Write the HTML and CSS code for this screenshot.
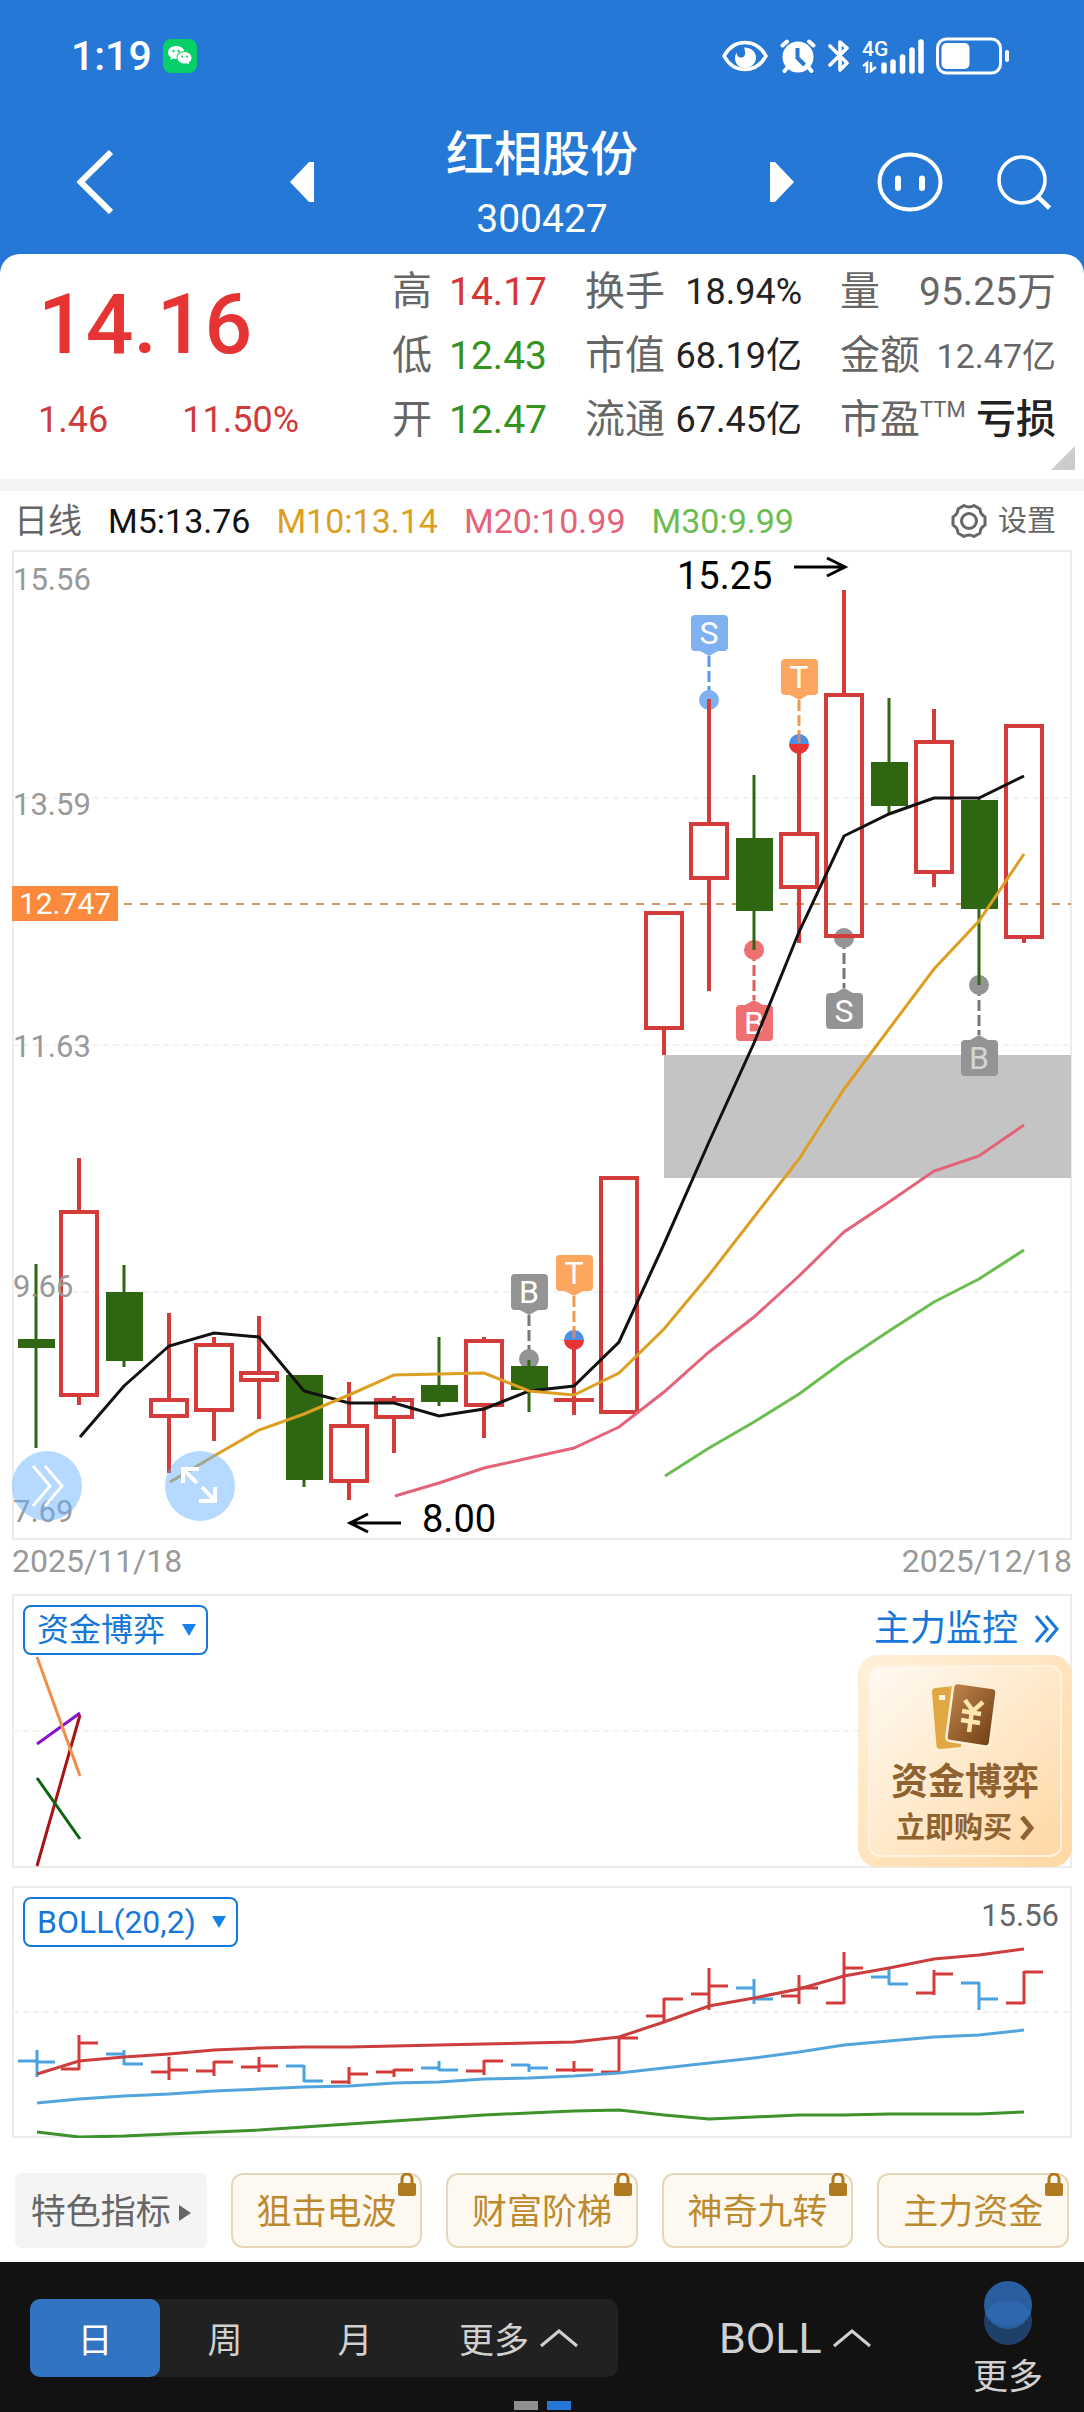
FILE: index.html
```html
<!DOCTYPE html>
<html lang="zh-CN">
<head>
<meta charset="utf-8">
<meta name="viewport" content="width=device-width">
<title>红相股份 300427</title>
<link rel="stylesheet" href="styles.css">
</head>
<body>
<header class="top">
  <div class="status">
    <span class="clock">1:19</span>
    <svg class="wechat" width="34" height="34" viewBox="0 0 34 34">
      <rect width="34" height="34" rx="8" fill="#07cf68"/>
      <path fill="#fff" d="M13 7c-4.500 0-8 2.900-8 6.500 0 2 1.100 3.800 2.900 5L7.300 21l2.900-1.500c.9.3 1.800.4 2.800.4h.8c-1-4.500 2.600-8 7.400-8C20.500 9 17.100 7 13 7z"/>
      <path fill="#fff" d="M21.500 13c-4 0-7 2.600-7 5.800s3 5.800 7 5.800c.8 0 1.600-.1 2.300-.3l2.400 1.300-.6-2.100c1.800-1.100 2.900-2.800 2.900-4.700 0-3.200-3-5.800-7-5.800z"/>
      <g fill="#07cf68"><circle cx="10.500" cy="12" r="1.200"/><circle cx="15.500" cy="12" r="1.200"/><circle cx="19" cy="17.500" r="1"/><circle cx="24" cy="17.500" r="1"/></g>
    </svg>
    <div class="status-icons">
      <svg width="46" height="36" viewBox="0 0 46 36"><path d="M2 18C7 9 14 4.500 23 4.500S39 9 44 18C39 27 32 31.500 23 31.500S7 27 2 18z" fill="none" stroke="#fff" stroke-width="3.600"/><path d="M22 9.500c7 0 12 4 12 10S29 30 23 30 13 26 13 20c0-2 .6-3.600 1.800-5 .2 3 1.700 4.500 4 4.500 3 0 4.800-2.500 4.300-5.600-.2-1.700-.6-3-1.100-4.400z" fill="#fff"/></svg>
      <svg width="36" height="36" viewBox="0 0 36 36"><g stroke="#fff" stroke-width="4" stroke-linecap="round"><path d="M2.500 7.500 7 3.500M33.500 7.500 29 3.500M7 30l-2.500 3M29 30l2.500 3"/></g><circle cx="18" cy="19" r="15.500" fill="#fff"/><path d="M17.500 10v10l7 7" fill="none" stroke="#2578d5" stroke-width="4"/></svg>
      <svg width="22" height="36" viewBox="0 0 22 36"><path d="M2 8l17 17-7 7V4l7 6L2 27" fill="none" stroke="#fff" stroke-width="3.600" stroke-linecap="round" stroke-linejoin="round"/></svg>
      <svg class="signal" width="62" height="36" viewBox="0 0 62 36"><text class="net" x="0" y="18">4G</text><path d="M1 28l4-3v10M9 24v9l5-4" fill="none" stroke="#fff" stroke-width="2.500"/><path d="M22 27v6M31 24v9M40.500 19v14M50 12v21M59 4v29" stroke="#fff" stroke-width="5.500" stroke-linecap="round"/></svg>
      <svg width="74" height="38" viewBox="0 0 74 38"><rect x="1.500" y="2" width="63" height="34" rx="9" fill="none" stroke="#fff" stroke-width="3"/><rect x="5.500" y="6" width="28" height="26" rx="5" fill="#fff"/><rect x="69" y="13" width="4" height="12" rx="2" fill="#fff"/></svg>
    </div>
  </div>
  <nav class="bar">
    <div class="bar-left">
      <button class="plain" aria-label="返回"><svg width="36" height="64" viewBox="0 0 36 64"><path d="M34 2 3.500 32 34 62" fill="none" stroke="#fff" stroke-width="6"/></svg></button>
      <button class="plain" aria-label="上一只"><svg width="24" height="40" viewBox="0 0 24 40"><path d="M24 0v40h-5L0 20 19 0z" fill="#fff"/></svg></button>
    </div>
    <div class="title"><h1>红相股份</h1><span>300427</span></div>
    <div class="bar-right">
      <button class="plain" aria-label="下一只"><svg width="24" height="40" viewBox="0 0 24 40"><path d="M0 0v40h5l19-20L5 0z" fill="#fff"/></svg></button>
      <button class="plain face" aria-label="助手"><svg width="66" height="60" viewBox="0 0 66 60"><ellipse cx="33" cy="30" rx="30.500" ry="27.500" fill="none" stroke="#fff" stroke-width="4"/><path d="M21 26.500v9.500M45 26.500v9.500" stroke="#fff" stroke-width="6" stroke-linecap="round"/></svg></button>
      <button class="plain" aria-label="搜索"><svg width="54" height="56" viewBox="0 0 54 56"><circle cx="25" cy="26" r="23" fill="none" stroke="#fff" stroke-width="3.600"/><path d="M41 43 52.500 54" stroke="#fff" stroke-width="4.500"/></svg></button>
    </div>
  </nav>
</header>

<main>
  <section class="quote">
    <div class="price">
      <strong>14.16</strong>
      <div class="change"><span>1.46</span><span>11.50%</span></div>
    </div>
    <dl class="stats">
      <div><dt>高</dt><dd class="up">14.17</dd></div>
      <div><dt>低</dt><dd class="down">12.43</dd></div>
      <div><dt>开</dt><dd class="down">12.47</dd></div>
    </dl>
    <dl class="stats">
      <div><dt>换手</dt><dd class="mid">18.94%</dd></div>
      <div><dt>市值</dt><dd class="mid">68.19亿</dd></div>
      <div><dt>流通</dt><dd class="mid">67.45亿</dd></div>
    </dl>
    <dl class="stats">
      <div><dt>量</dt><dd>95.25万</dd></div>
      <div><dt>金额</dt><dd class="small">12.47亿</dd></div>
      <div><dt>市盈<sup>TTM</sup></dt><dd class="loss">亏损</dd></div>
    </dl>
    <svg class="corner" width="24" height="24" viewBox="0 0 24 24"><path d="M24 0v24H0z" fill="#ccc"/></svg>
  </section>

  <div class="legend">
    <span class="period">日线</span>
    <span class="m5">M5:13.76</span>
    <span class="m10">M10:13.14</span>
    <span class="m20">M20:10.99</span>
    <span class="m30">M30:9.99</span>
    <button class="plain settings">
      <svg width="38" height="38" viewBox="0 0 38 38" fill="none" stroke="#666" stroke-width="3" stroke-linejoin="round"><path d="M14 3.500q5 3 10 0l6 3.500q0 5 5 8v8q-5 3-5 8l-6 3.500q-5-3-10 0L8 31q0-5-5-8v-8q5-3 5-8z"/><circle cx="19" cy="19" r="7.500"/></svg>
      设置
    </button>
  </div>

  <section class="chart">
    <svg class="plot" viewBox="12 550 1060 990" role="img" aria-label="日K线">
      <rect class="frame" x="13" y="551" width="1058" height="988"/>
      <path class="grid" d="M13 798H1071M13 1045H1071M13 1292H1071"/>
      <path d="M124 904H1071" stroke="#cf9a5f" stroke-width="2" stroke-dasharray="8 8"/>
      <rect x="664" y="1055" width="407" height="123" fill="#c4c4c4"/>

      <g class="leads">
        <path d="M709 656V700" stroke="#5a98e8"/><path d="M799 700V744" stroke="#f09a50"/>
        <path d="M754 950V1000" stroke="#e05a5a"/><path d="M844 938V988" stroke="#777"/>
        <path d="M979 985V1035" stroke="#777"/><path d="M529 1315V1359" stroke="#777"/>
        <path d="M574 1296V1340" stroke="#f09a50"/>
      </g>
      <g>
        <circle cx="709" cy="700" r="10" fill="#7fb1f0"/>
        <circle cx="754" cy="950" r="10" fill="#ef7070"/>
        <circle cx="844" cy="938" r="10" fill="#949494"/>
        <circle cx="979" cy="985" r="10" fill="#949494"/>
        <circle cx="529" cy="1359" r="10" fill="#949494"/>
      </g>

      <path class="red" d="M79 1158V1212M79 1396V1405M169 1313V1400M169 1416V1473M214 1337V1345M214 1410V1441M259 1316V1373M259 1380V1419M349 1382V1426M349 1481V1500M394 1396V1400M394 1417V1453M484 1337V1341M484 1405V1438M574 1340V1415M664 1028V1055M709 699V824M709 878V991M799 744V834M799 887V943M844 590V695M934 709V742M934 872V887M1024 724V726M1024 937V943"/>
      <g class="red">
        <rect x="61" y="1212" width="36" height="183"/><rect x="151" y="1400" width="36" height="16"/>
        <rect x="196" y="1345" width="36" height="65"/><rect x="241" y="1373" width="36" height="7"/>
        <rect x="331" y="1426" width="36" height="55"/><rect x="376" y="1400" width="36" height="17"/>
        <rect x="466" y="1341" width="36" height="64"/><path d="M554 1400H594"/>
        <rect x="601" y="1178" width="36" height="234"/><rect x="646" y="913" width="36" height="115"/>
        <rect x="691" y="824" width="36" height="54"/><rect x="781" y="834" width="36" height="53"/>
        <rect x="826" y="695" width="36" height="241"/><rect x="916" y="742" width="36" height="130"/>
        <rect x="1006" y="726" width="36" height="211"/>
      </g>
      <path class="green-wick" d="M36 1264V1448M124 1265V1367M304 1375V1487M439 1337V1406M529 1360V1412M754 775V950M889 698V815M979 798V985"/>
      <path class="green" d="M18 1339h37v9h-37zM106 1292h37v69h-37zM286 1375h37v105h-37zM421 1385h37v17h-37zM511 1366h37v24h-37zM736 838h37v73h-37zM871 762h37v44h-37zM961 800h37v109h-37z"/>

      <g>
        <path d="M789 744a10 10 0 0 1 20 0z" fill="#4a90e6"/><path d="M789 744a10 10 0 0 0 20 0z" fill="#e63333"/><path d="M799 734v9" stroke="#d08a70" stroke-width="3"/>
        <path d="M564 1340a10 10 0 0 1 20 0z" fill="#4a90e6"/><path d="M564 1340a10 10 0 0 0 20 0z" fill="#e63333"/><path d="M574 1330v8" stroke="#d08a70" stroke-width="3"/>
      </g>

      <g class="tags">
        <g fill="#7fb1f0"><rect x="691" y="615" width="37" height="36" rx="4"/><path d="M700 651h18l-9 5z"/></g>
        <g fill="#fda660"><rect x="781" y="659" width="37" height="36" rx="4"/><path d="M790 695h18l-9 5z"/><rect x="556" y="1255" width="37" height="36" rx="4"/><path d="M565 1291h18l-9 5z"/></g>
        <g fill="#ef7070"><rect x="736" y="1005" width="37" height="36" rx="4"/><path d="M745 1005h18l-9-5z"/></g>
        <g fill="#949494"><rect x="826" y="993" width="37" height="36" rx="4"/><path d="M835 993h18l-9-5z"/><rect x="961" y="1040" width="37" height="36" rx="4"/><path d="M970 1040h18l-9-5z"/><rect x="511" y="1274" width="37" height="36" rx="4"/><path d="M520 1310h18l-9 5z"/></g>
        <g class="tag-text">
          <text x="709" y="644">S</text><text x="799" y="688">T</text><text x="754" y="1034">B</text><text x="844" y="1022">S</text><text x="529" y="1303">B</text><text x="574" y="1284">T</text>
          <text x="979" y="1069" class="shaded">B</text>
        </g>
      </g>

      <g class="line">
        <polyline stroke="#111" points="80,1437 124,1386 169,1346 214,1333 259,1337 304,1391 349,1403 394,1403 439,1416 484,1409 529,1391 574,1386 619,1342 664,1244 709,1142 754,1043 799,932 844,836 889,814 934,798 979,798 1024,776"/>
        <polyline stroke="#dd9f22" points="170,1482 214,1456 259,1430 304,1414 349,1395 394,1375 439,1374 484,1373 529,1391 574,1395 619,1373 664,1329 709,1275 754,1217 799,1159 844,1089 889,1029 934,969 979,921 1024,854"/>
        <polyline stroke="#e5637a" points="395,1496 439,1483 484,1468 529,1458 574,1448 619,1427 664,1392 709,1352 754,1317 799,1276 844,1232 889,1202 934,1171 979,1156 1024,1125"/>
        <polyline stroke="#6cbd50" points="665,1476 709,1448 754,1422 799,1394 844,1361 889,1331 934,1302 979,1279 1024,1250"/>
      </g>

      <g class="axis">
        <text x="13" y="590">15.56</text><text x="13" y="815">13.59</text><text x="13" y="1057">11.63</text><text x="13" y="1297">9.66</text><text x="13" y="1522">7.69</text>
      </g>
      <rect x="12" y="886" width="106" height="35" fill="#fb8a3c"/>
      <text class="cost" x="65" y="914">12.747</text>
      <g class="extreme">
        <text x="677" y="589">15.25</text><path d="M794 567h51M827 558l18 9-18 9"/>
        <text x="422" y="1532">8.00</text><path d="M401 1523h-51M368 1514l-18 9 18 9"/>
      </g>
    </svg>
    <div class="float">
      <button class="round" aria-label="展开"><svg width="70" height="70" viewBox="0 0 70 70"><path d="M21 15 38 35 21 55M33 15 50 35 33 55" fill="none" stroke="#fff" stroke-width="3"/></svg></button>
      <button class="round" aria-label="全屏"><svg width="70" height="70" viewBox="0 0 70 70"><path d="M32 32 18 18M18 32V18h16M37 36 50 50M50 36V50H34" fill="none" stroke="#fff" stroke-width="4"/></svg></button>
    </div>
  </section>
  <div class="dates"><time>2025/11/18</time><time>2025/12/18</time></div>

  <section class="panel">
    <svg class="plot" viewBox="12 1594 1060 274" role="img" aria-label="资金博弈曲线">
      <rect class="frame" x="13" y="1595" width="1058" height="272"/>
      <path class="grid" d="M13 1731H1071"/>
      <g class="line">
        <path d="M37 1744 80 1713" stroke="#8b10d0"/><path d="M37 1866 80 1715" stroke="#a81212"/>
        <path d="M37 1657 80 1776" stroke="#ef8f48"/><path d="M37 1778 80 1839" stroke="#0b640b"/>
      </g>
    </svg>
    <div class="overlay">
      <label class="picker"><select aria-label="指标"><option>资金博弈</option></select><svg width="14" height="12" viewBox="0 0 14 12"><path d="M0 0h14L7 12z" fill="#1481ee"/></svg></label>
      <div class="side">
        <a class="monitor" href="#">主力监控<svg width="26" height="30" viewBox="0 0 26 30"><path d="M2 2 13 15 2 28M12 2 23 15 12 28" fill="none" stroke="#1577d8" stroke-width="3"/></svg></a>
        <a class="promo" href="#">
          <span class="promo-in">
            <svg width="68" height="70" viewBox="0 0 68 70">
              <defs>
                <linearGradient id="card" x1="0" y1="0" x2="1" y2="1"><stop offset="0" stop-color="#c58a50"/><stop offset="1" stop-color="#6b3a0e"/></linearGradient>
              </defs>
              <path d="M5 7 32 4 30 66 9 68q-3 0-3.500-3L1 11q0-4 4-4z" fill="#e0a743"/><rect x="8" y="14" width="6" height="5" fill="#fff8e0"/>
              <path d="M27 2 62 7q4 1 3.500 5L59 62q-.5 4-4.500 3.500L19 60q-4-.5-3.500-4.500L22 6q1-4.500 5-4z" fill="url(#card)" stroke="#ffeed6" stroke-width="2.500"/>
              <path d="M34 19 42 30 52 21M31 30 50 33M30 39 49 42M41 30 38 51" fill="none" stroke="#ffe5b0" stroke-width="4.500"/>
            </svg>
            <b>资金博弈</b>
            <span class="buy">立即购买<svg width="14" height="26" viewBox="0 0 14 26"><path d="M2 2 11 13 2 24" fill="none" stroke="#8f6230" stroke-width="5"/></svg></span>
          </span>
        </a>
      </div>
    </div>
  </section>

  <section class="panel boll">
    <svg class="plot" viewBox="12 1886 1060 252" role="img" aria-label="BOLL">
      <rect class="frame" x="13" y="1887" width="1058" height="250"/>
      <path class="grid" d="M13 2012H1071"/>
      <path class="bar-red" d="M79 2035V2070M61 2069H79M79 2043H98M169 2057V2080M151 2072H169M169 2070H188M214 2061V2076M196 2071H214M214 2062H233M259 2057V2072M241 2067H259M259 2066H278M349 2067V2084M331 2082H349M349 2074H368M394 2069V2077M376 2072H394M394 2070H413M484 2060V2075M466 2071H484M484 2061H503M574 2061V2072M556 2070H593M619 2037V2073M601 2072H619M619 2038H638M664 1998V2021M646 2016H664M664 1999H683M709 1968V2010M691 1994H709M709 1986H728M799 1975V2004M781 1996H799M799 1988H818M844 1952V2004M826 2003H844M844 1968H863M934 1970V1995M916 1993H934M934 1974H953M1024 1971V2004M1006 2003H1024M1024 1972H1043"/>
      <path class="bar-blue" d="M37 2050V2077M18 2061H37M37 2062H55M124 2050V2065M106 2054H124M124 2064H143M304 2065V2082M286 2066H304M304 2081H323M439 2061V2071M421 2068H439M439 2070H458M529 2064V2072M511 2065H529M529 2068H548M754 1979V2004M736 1988H754M754 1999H773M889 1967V1985M871 1977H889M889 1984H908M979 1982V2010M961 1983H979M979 1999H998"/>
      <g class="line">
        <polyline stroke="#cc3d3d" points="37,2074 79,2061 124,2057 169,2054 214,2050 259,2048 304,2047 349,2047 394,2046 439,2045 484,2044 529,2043 574,2042 619,2037 664,2022 709,2006 754,1998 799,1989 844,1976 889,1968 934,1959 979,1955 1024,1949"/>
        <polyline stroke="#51a5dc" points="37,2103 79,2099 124,2096 169,2094 214,2091 259,2089 304,2087 349,2086 394,2083 439,2082 484,2079 529,2078 574,2076 619,2073 664,2068 709,2063 754,2058 799,2052 844,2045 889,2041 934,2037 979,2035 1024,2030"/>
        <polyline stroke="#3e912b" points="37,2132 79,2137 124,2136 169,2134 214,2132 259,2130 304,2127 349,2124 394,2121 439,2118 484,2115 529,2113 574,2111 619,2110 664,2115 709,2119 754,2117 799,2115 844,2115 889,2114 934,2114 979,2114 1024,2112"/>
      </g>
    </svg>
    <div class="overlay">
      <label class="picker"><select aria-label="指标"><option>BOLL(20,2)</option></select><svg width="14" height="12" viewBox="0 0 14 12"><path d="M0 0h14L7 12z" fill="#1481ee"/></svg></label>
      <span class="peak">15.56</span>
    </div>
  </section>

  <div class="chips">
    <button class="chip lead">特色指标<svg width="12" height="16" viewBox="0 0 12 16"><path d="M0 0 12 8 0 16z" fill="#666"/></svg></button>
    <button class="chip">狙击电波<svg class="lock" width="18" height="24" viewBox="0 0 18 24"><path d="M4 11V6a5 5 0 0 1 10 0v5" fill="none" stroke="#b07a20" stroke-width="3"/><rect y="10" width="18" height="13" rx="2" fill="#b07a20"/></svg></button>
    <button class="chip">财富阶梯<svg class="lock" width="18" height="24" viewBox="0 0 18 24"><path d="M4 11V6a5 5 0 0 1 10 0v5" fill="none" stroke="#b07a20" stroke-width="3"/><rect y="10" width="18" height="13" rx="2" fill="#b07a20"/></svg></button>
    <button class="chip">神奇九转<svg class="lock" width="18" height="24" viewBox="0 0 18 24"><path d="M4 11V6a5 5 0 0 1 10 0v5" fill="none" stroke="#b07a20" stroke-width="3"/><rect y="10" width="18" height="13" rx="2" fill="#b07a20"/></svg></button>
    <button class="chip">主力资金<svg class="lock" width="18" height="24" viewBox="0 0 18 24"><path d="M4 11V6a5 5 0 0 1 10 0v5" fill="none" stroke="#b07a20" stroke-width="3"/><rect y="10" width="18" height="13" rx="2" fill="#b07a20"/></svg></button>
  </div>
</main>

<footer class="dock">
  <div class="dock-row">
    <div class="segments">
      <button class="seg on">日</button><button class="seg">周</button><button class="seg">月</button>
      <button class="seg wide">更多<svg width="40" height="20" viewBox="0 0 40 20"><path d="M2 18 20 3 38 18" fill="none" stroke="#d0d0d0" stroke-width="3"/></svg></button>
    </div>
    <button class="plain indicator">BOLL<svg width="40" height="20" viewBox="0 0 40 20"><path d="M2 18 20 3 38 18" fill="none" stroke="#d0d0d0" stroke-width="3"/></svg></button>
    <button class="plain more"><svg width="48" height="64" viewBox="0 0 48 64"><circle cx="24" cy="40" r="24" fill="#1f4169"/><circle cx="24" cy="24" r="24" fill="#2a5f9f"/><path d="M1 32a24 17 0 0 1 46 0 24 17 0 0 1-46 0z" fill="#2d68ae"/></svg>更多</button>
  </div>
  <div class="pages"><i></i><i class="on"></i></div>
</footer>
</body>
</html>
```
FILE: styles.css
```css
* { box-sizing: border-box; }
body {
  margin: 0;
  background: #fff;
  color: #666;
  font-family: Roboto, "Noto Sans CJK SC", sans-serif;
}
svg { display: block; flex: none; }
dl, dd, h1 { margin: 0; }
button, select { font: inherit; color: inherit; }
.plain { border: 0; padding: 0; background: none; }
a { text-decoration: none; }

.top { background: #2578d5; color: #fff; }
.status {
  display: flex;
  align-items: center;
  height: 112px;
  padding: 0 74px 0 71px;
}
.clock { font-size: 41px; font-weight: 500; line-height: 48px; }
.wechat { margin-left: 11px; }
.status-icons { display: flex; align-items: center; gap: 12px; margin-left: auto; }
.signal { overflow: visible; }
.net { font-size: 21px; font-weight: 500; fill: #fff; }

.bar {
  display: grid;
  grid-template-columns: 1fr auto 1fr;
  align-items: center;
  column-gap: 132px;
  height: 142px;
  padding-bottom: 2px;
}
.bar-left, .bar-right { display: flex; align-items: center; }
.bar-left { justify-content: space-between; padding-left: 77px; }
.bar-right { gap: 54px; padding-right: 33px; }
.face { margin-left: auto; }
.title { padding-top: 10px; text-align: center; }
.title h1 { font-size: 48px; font-weight: 500; line-height: 64px; }
.title span { display: block; font-size: 39px; line-height: 64px; }

main { background: #2578d5; }
.quote {
  position: relative;
  display: grid;
  grid-template-columns: 1fr 155px 217px 216px;
  column-gap: 38px;
  padding: 6px 28px 27px 38px;
  border-radius: 20px 20px 0 0;
  background: #fff;
}
.price { color: #cf3a3a; }
.price strong {
  display: block;
  font-size: 84px;
  font-weight: 500;
  line-height: 130px;
  color: #e63333;
}
.change { display: flex; gap: 74px; font-size: 36px; line-height: 60px; }
.stats div {
  display: flex;
  justify-content: space-between;
  align-items: center;
  height: 64px;
  font-size: 39px;
  line-height: 64px;
  white-space: nowrap;
}
.stats dt { font-size: 40px; }
.stats .up { color: #d83636; }
.stats .down { color: #35941f; }
.stats .mid { font-size: 36px; color: #222; }
.stats .small { font-size: 34px; }
.stats .loss { font-size: 40px; font-weight: 500; color: #222; }
.stats sup { font-size: 22px; line-height: 22px; vertical-align: 16px; }
.corner { position: absolute; right: 9px; bottom: 9px; }

.legend {
  display: flex;
  align-items: center;
  gap: 26px;
  height: 71px;
  padding: 0 28px 0 14px;
  border-top: 12px solid #f4f4f4;
  background: #fff;
  font-size: 34px;
  line-height: 40px;
}
.m5 { color: #111; }
.m10 { color: #dd9f22; }
.m20 { color: #e5637a; }
.m30 { color: #6cbd50; }
.settings { display: flex; align-items: center; gap: 10px; margin-left: auto; font-size: 29px; }

.chart { position: relative; padding: 0 12px; background: #fff; }
.plot { width: 100%; height: auto; }
.frame { fill: none; stroke: #ececec; stroke-width: 2; }
.grid { stroke: #f2f2f2; stroke-width: 2; stroke-dasharray: 6 4; }
.red { fill: none; stroke: #d43c3c; stroke-width: 4; }
.green-wick { stroke: #2f6612; stroke-width: 3; }
.green { fill: #2f6612; }
.bar-red { fill: none; stroke: #d43c3c; stroke-width: 3; }
.bar-blue { fill: none; stroke: #4aa3e0; stroke-width: 3; }
.line { fill: none; stroke-width: 3; }
.leads { stroke-width: 3; stroke-dasharray: 11 4; }
.tag-text { fill: #fff; font-size: 32px; text-anchor: middle; }
.shaded { fill: #d4d4d4; }
.axis { fill: #999; font-size: 31px; }
.cost { fill: #fff; font-size: 30px; text-anchor: middle; }
.extreme { font-size: 38px; fill: #000; }
.extreme path { fill: none; stroke: #000; stroke-width: 3; }
.float { position: absolute; left: 12px; bottom: 19px; display: flex; gap: 83px; }
.round { padding: 0; border: 0; border-radius: 50%; background: rgba(100, 175, 255, .48); }

.dates {
  display: flex;
  justify-content: space-between;
  height: 54px;
  padding: 1px 12px 0;
  background: #fff;
  color: #999;
  font-size: 32px;
  line-height: 40px;
}

.panel { display: grid; padding: 0 12px; background: #fff; }
.panel > * { grid-area: 1 / 1; }
.boll { padding-top: 18px; }
.overlay {
  display: flex;
  justify-content: space-between;
  align-items: flex-start;
  z-index: 1;
  padding-left: 11px;
}
.picker { display: grid; align-items: center; margin-top: 11px; color: #1577d8; }
.picker > * { grid-area: 1 / 1; }
.picker svg { justify-self: end; margin-right: 12px; }
.picker select {
  height: 50px;
  padding: 0 40px 0 12px;
  border: 2px solid #1577d8;
  border-radius: 8px;
  background: none;
  appearance: none;
  font-size: 32px;
  line-height: 46px;
}
.side { display: flex; flex-direction: column; align-items: flex-end; width: 214px; }
.monitor {
  display: flex;
  align-items: center;
  gap: 16px;
  height: 61px;
  padding: 8px 12px 0 0;
  color: #1577d8;
  font-size: 36px;
  line-height: 54px;
  white-space: nowrap;
}
.promo {
  width: 214px;
  padding: 10px;
  border-radius: 20px;
  background: linear-gradient(135deg, #fff0d9, #ffd8a4);
  color: #8f6230;
}
.promo-in {
  display: flex;
  flex-direction: column;
  align-items: center;
  height: 192px;
  padding-top: 14px;
  border: 2px solid #fff2e0;
  border-radius: 12px;
  background: linear-gradient(135deg, #fffaf2, #ffd8a4);
}
.promo b { padding-top: 4px; font-size: 37px; line-height: 56px; }
.buy { display: flex; align-items: center; gap: 8px; font-size: 29px; font-weight: 700; line-height: 34px; }
.peak { padding: 12px 13px 0 0; font-size: 31px; line-height: 36px; }

.chips {
  display: grid;
  grid-template-columns: repeat(5, 1fr);
  gap: 24px;
  padding: 35px 15px 14px;
  background: #fff;
}
.chip {
  position: relative;
  height: 75px;
  padding: 4px 0 0;
  border: 2px solid #e6d7bb;
  border-radius: 12px;
  background: #fdf9f1;
  color: #bd8a30;
  font-size: 35px;
  line-height: 66px;
}
.lead {
  display: flex;
  justify-content: center;
  align-items: center;
  gap: 8px;
  border-color: #f4f4f4;
  border-radius: 6px;
  background: #f4f4f4;
  color: #666;
}
.lock { position: absolute; right: 4px; top: -2px; }

.dock { background: #121212; color: #d0d0d0; }
.dock-row {
  display: flex;
  align-items: center;
  height: 139px;
  padding: 12px 41px 0 30px;
}
.segments { display: flex; border-radius: 10px; background: #212121; }
.seg {
  width: 130px;
  height: 78px;
  padding: 0;
  border: 0;
  border-radius: 10px;
  background: none;
  font-size: 35px;
}
.seg.on { background: #3175c2; color: #fff; }
.seg.wide { display: flex; align-items: center; justify-content: center; gap: 10px; width: 198px; }
.indicator { display: flex; align-items: center; gap: 10px; margin-left: 101px; font-size: 43px; }
.more {
  display: flex;
  flex-direction: column;
  align-items: center;
  gap: 8px;
  margin-left: auto;
  padding-top: 8px;
  font-size: 35px;
  line-height: 50px;
}
.pages { display: flex; justify-content: center; gap: 9px; height: 11px; }
.pages i { width: 24px; height: 9px; background: #8f8f8f; }
.pages .on { background: #2578d5; }
```
